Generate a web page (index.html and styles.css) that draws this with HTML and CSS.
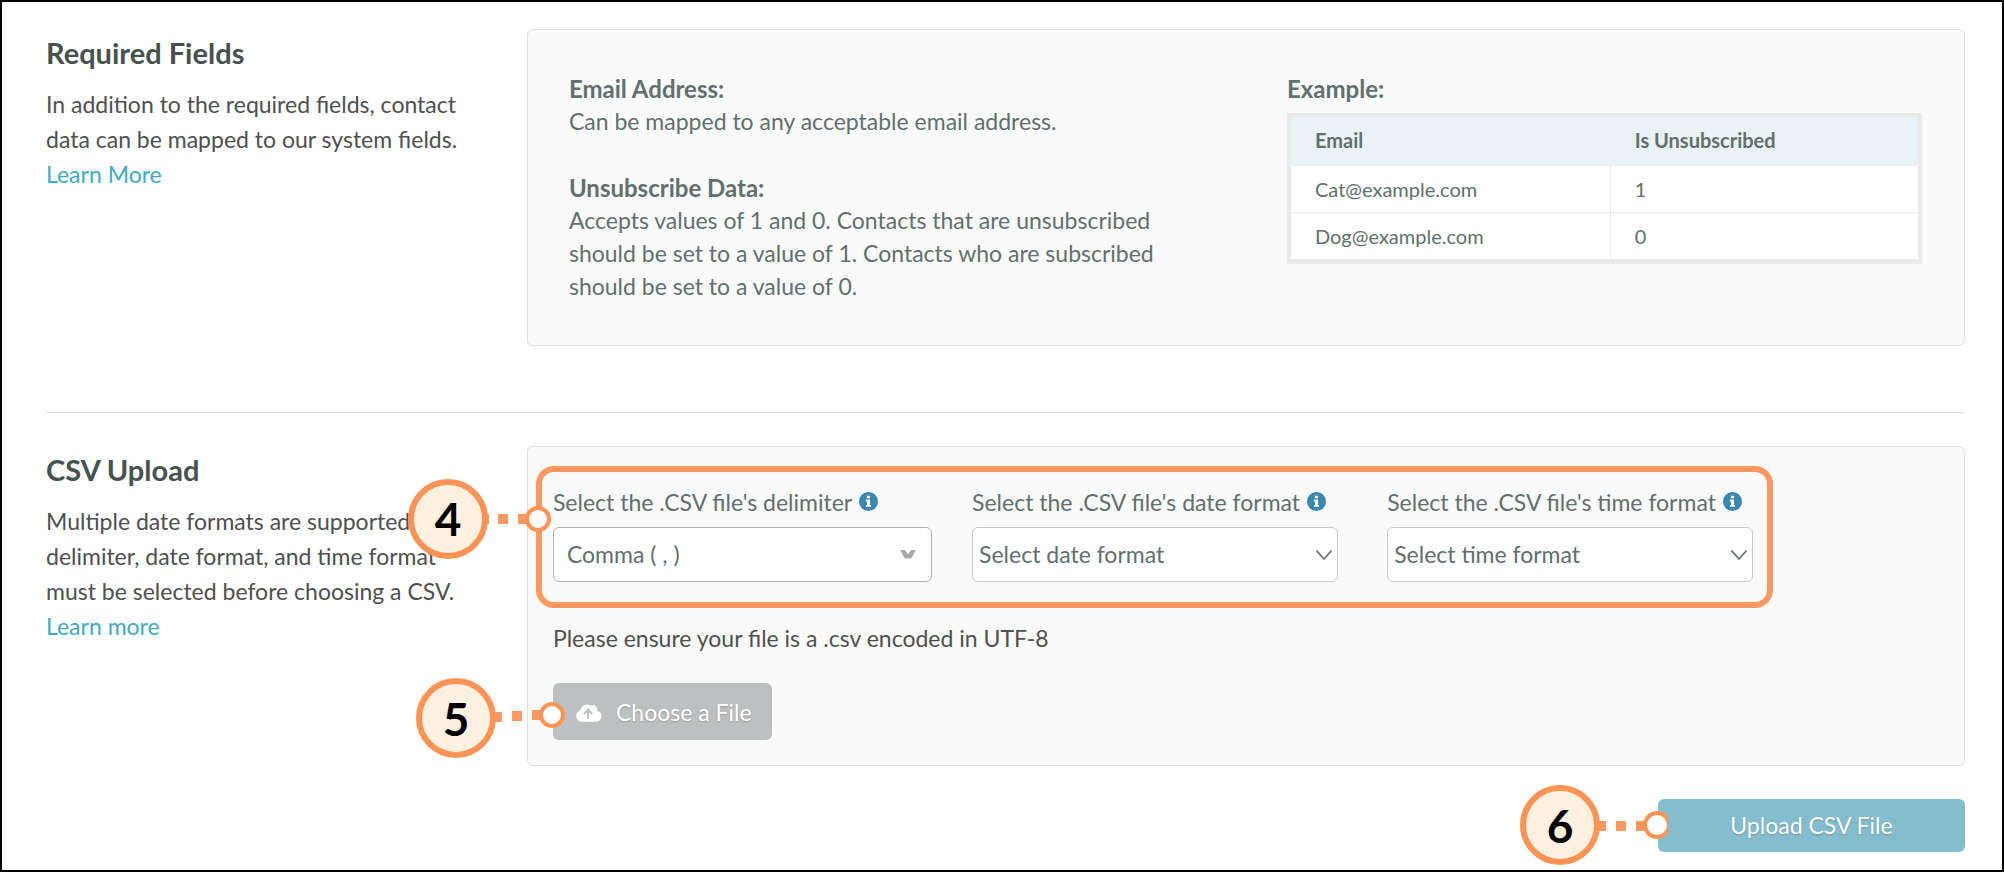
FILE: index.html
```html
<!DOCTYPE html>
<html lang="en">
<head>
<meta charset="utf-8">
<title>CSV Upload</title>
<link rel="stylesheet" href="styles.css">
</head>
<body>
<main class="page">
  <section class="section">
    <div class="intro">
      <h2 class="title">Required Fields</h2>
      <p class="copy">In addition to the required fields, contact data can be mapped to our system fields. <a class="link" href="#">Learn More</a></p>
    </div>
    <div class="panel panel-split">
      <div class="half">
        <dl class="specs">
          <dt>Email Address:</dt>
          <dd>Can be mapped to any acceptable email address.</dd>
          <dt>Unsubscribe Data:</dt>
          <dd>Accepts values of 1 and 0. Contacts that are unsubscribed should be set to a value of 1. Contacts who are subscribed should be set to a value of 0.</dd>
        </dl>
      </div>
      <div class="half">
        <h3 class="example">Example:</h3>
        <table class="table">
          <thead><tr><th>Email</th><th>Is Unsubscribed</th></tr></thead>
          <tbody>
            <tr><td>Cat@example.com</td><td>1</td></tr>
            <tr><td>Dog@example.com</td><td>0</td></tr>
          </tbody>
        </table>
      </div>
    </div>
  </section>

  <hr class="rule">

  <section class="section">
    <div class="intro">
      <h2 class="title">CSV Upload</h2>
      <p class="copy">Multiple date formats are supported. A delimiter, date format, and time format must be selected before choosing a CSV. <a class="link" href="#">Learn more</a></p>
    </div>
    <div class="panel panel-form">
      <div class="fields">
        <div class="field field-delimiter">
          <div class="label-row">
            <label for="delimiter">Select the .CSV file's delimiter</label>
            <svg class="info" viewBox="0 0 20 20" aria-hidden="true"><circle cx="10" cy="10" r="10"/><path d="M8.300 4h3.200v2.600H8.300zM7.400 8h4.200v5.600h1v1.900H7.400v-1.900h1V9.900h-1z"/></svg>
          </div>
          <div class="control control-strong">
            <select id="delimiter"><option>Comma ( , )</option></select>
            <svg class="caret" viewBox="0 0 16 10" aria-hidden="true"><path d="M0 0h5l3 4.500L11 0h5l-5 8.500H5z"/></svg>
          </div>
        </div>
        <div class="field field-date">
          <div class="label-row">
            <label for="date">Select the .CSV file's date format</label>
            <svg class="info" viewBox="0 0 20 20" aria-hidden="true"><circle cx="10" cy="10" r="10"/><path d="M8.300 4h3.200v2.600H8.300zM7.400 8h4.200v5.600h1v1.900H7.400v-1.900h1V9.900h-1z"/></svg>
          </div>
          <div class="control">
            <select id="date"><option>Select date format</option></select>
            <svg class="chevron" viewBox="0 0 16 10" aria-hidden="true"><path stroke-width="1.600" d="M.5.500L8 9l7.500-8.500"/></svg>
          </div>
        </div>
        <div class="field">
          <div class="label-row">
            <label for="time">Select the .CSV file's time format</label>
            <svg class="info" viewBox="0 0 20 20" aria-hidden="true"><circle cx="10" cy="10" r="10"/><path d="M8.300 4h3.200v2.600H8.300zM7.400 8h4.200v5.600h1v1.900H7.400v-1.900h1V9.900h-1z"/></svg>
          </div>
          <div class="control">
            <select id="time"><option>Select time format</option></select>
            <svg class="chevron" viewBox="0 0 16 10" aria-hidden="true"><path stroke-width="1.600" d="M.5.500L8 9l7.500-8.500"/></svg>
          </div>
        </div>
        <svg class="callout callout-fields" viewBox="0 0 150 84" aria-hidden="true">
          <path class="dots" d="M78 42h4M91 42h10M111 42h10"/>
          <circle class="badge" cx="41" cy="42" r="37"/>
          <circle class="dot" cx="131" cy="42" r="11"/>
          <text class="num" x="41" y="59">4</text>
        </svg>
      </div>
      <p class="note">Please ensure your file is a .csv encoded in UTF-8</p>
      <div class="anchor">
        <button class="btn btn-file" type="button">
          <svg class="cloud" viewBox="0 0 28 20" aria-hidden="true"><path fill-rule="evenodd" d="M22.600 8.700A4.200 4.200 0 0 0 16.400 3.500 7 7 0 0 0 5.600 8.300 6 6 0 0 0 6.500 20h15.700a5.700 5.700 0 0 0 .4-11.300zM13.600 6l5 5.200-1.500 1.500-2.500-2.500V17h-2v-6.800l-2.500 2.500-1.500-1.500z"/></svg>
          Choose a File
        </button>
        <svg class="callout callout-file" viewBox="0 0 150 84" aria-hidden="true">
          <path class="dots" d="M77 41h10M97 40h10M117 39h10"/>
          <circle class="badge" cx="41" cy="42" r="37"/>
          <circle class="dot" cx="137" cy="39" r="11"/>
          <text class="num" x="41" y="60">5</text>
        </svg>
      </div>
    </div>
  </section>

  <div class="actions">
    <div class="anchor anchor-wide">
      <button class="btn btn-upload" type="button">Upload CSV File</button>
      <svg class="callout callout-upload" viewBox="0 0 150 84" aria-hidden="true">
        <path class="dots" d="M78 43h10M98 43h10M118 43h10"/>
        <circle class="badge" cx="42" cy="42" r="37"/>
        <circle class="dot" cx="139" cy="42" r="12"/>
        <text class="num" x="42" y="60">6</text>
      </svg>
    </div>
  </div>
</main>
</body>
</html>
```
FILE: styles.css
```css
* {
  box-sizing: border-box;
}

body {
  margin: 0;
  background: #fff;
  color: #4f5050;
  font: 23px/35px Lato, "Open Sans", sans-serif;
}

h2, h3, p, dl, dd {
  margin: 0;
}

.page {
  display: flex;
  flex-direction: column;
  min-height: 100vh;
  padding: 27px 37px 16px 44px;
  border: 2px solid #000;
}

.section {
  display: grid;
  grid-template-columns: minmax(0, 1fr) minmax(0, 2.99fr);
}

.title {
  padding-top: 6px;
  color: #465150;
  font-size: 29px;
  font-weight: 700;
  line-height: 35px;
}

.copy {
  padding: 17px 56px 0 0;
}

.link {
  color: #3dacc4;
  text-decoration: none;
}

.panel {
  background: #fafafa;
  border: 1px solid #dedfdf;
  border-radius: 6px;
  color: #61706e;
}

.panel-split {
  display: grid;
  grid-template-columns: 1fr 1fr;
  line-height: 33px;
}

.half {
  padding: 42px 42px 42px 41px;
}

.specs dt {
  font-size: 24px;
  font-weight: 700;
}

.specs dd {
  padding-right: 30px;
}

.specs dd + dt {
  margin-top: 33px;
}

.example {
  font-size: 24px;
  line-height: 33px;
}

.table {
  width: 100%;
  margin-top: 8px;
  border: 4px solid #e9eaea;
  border-collapse: separate;
  border-spacing: 0;
  background: #fff;
  font-size: 20px;
  line-height: 30px;
  text-align: left;
}

.table th,
.table td {
  width: 50%;
  padding: 8px 24px;
  border-bottom: 1px solid #e9eaea;
}

.table th {
  padding-bottom: 10px;
  background: #eaf2f5;
}

.table td:first-child {
  width: 51%;
  border-right: 1px solid #e9eaea;
}

.rule {
  width: 100%;
  height: 1px;
  margin: 66px 0 33px;
  border: 0;
  background: #dcdddd;
}

.panel-form {
  padding: 39px 25px 25px;
}

.fields {
  position: relative;
  display: grid;
  grid-template-columns: 419fr 415fr 366fr;
  width: 86.6%;
}

.field-delimiter {
  padding-right: 40px;
}

.field-date {
  padding-right: 49px;
}

.fields::after {
  content: "";
  position: absolute;
  inset: -20px -20px -26px -17px;
  border: 6px solid #ff9860;
  border-radius: 18px;
  pointer-events: none;
}

.label-row {
  display: flex;
  align-items: center;
  gap: 7px;
  line-height: 33px;
  white-space: nowrap;
}

.info {
  width: 19px;
  height: 19px;
  margin-bottom: 2px;
  fill: #3a87b0;
}

.info path {
  fill: #fff;
}

.control {
  position: relative;
  margin-top: 8px;
}

.control select {
  width: 100%;
  height: 55px;
  padding: 0 40px 0 6px;
  border: 1px solid #cacccc;
  border-radius: 6px;
  appearance: none;
  background: #fff;
  color: inherit;
  font: inherit;
}

.control-strong select {
  padding-left: 13px;
  border-color: #adb0b0;
}

.caret,
.chevron {
  position: absolute;
  top: 23px;
  width: 16px;
  height: 10px;
  pointer-events: none;
}

.caret {
  right: 16px;
  fill: #a9abab;
}

.chevron {
  right: 6px;
  fill: none;
  stroke: #61706e;
}

.note {
  margin-top: 39px;
  color: #4f5050;
}

.anchor {
  position: relative;
  width: fit-content;
  margin-top: 27px;
}

.btn {
  display: flex;
  align-items: center;
  justify-content: center;
  border: 0;
  border-radius: 6px;
  color: #fff;
  font: inherit;
  text-shadow: 0 1px 2px rgba(0, 0, 0, 0.2);
}

.btn-file {
  gap: 14px;
  padding: 12px 20px 10px 22px;
  background: #bcc0c0;
}

.cloud {
  width: 27px;
  height: 20px;
  margin-bottom: 2px;
  fill: #fff;
}

.actions {
  display: flex;
  justify-content: flex-end;
  padding-top: 33px;
}

.anchor-wide {
  width: 16%;
  margin-top: 0;
}

.btn-upload {
  width: 100%;
  padding: 9px 16px;
  background: #84bece;
}

.callout {
  position: absolute;
  z-index: 1;
  width: 150px;
  height: 84px;
}

.callout-fields {
  top: -9px;
  left: -146px;
}

.callout-file {
  top: -7px;
  left: -138px;
}

.callout-upload {
  top: -16px;
  left: -140px;
}

.dots {
  fill: none;
  stroke: #ff9860;
  stroke-width: 10;
}

.badge {
  fill: #fff1e0;
  stroke: #ff9355;
  stroke-width: 6;
}

.dot {
  fill: #fff;
  stroke: #ff9355;
  stroke-width: 4;
}

.num {
  fill: #000;
  font-size: 46px;
  font-weight: 700;
  text-anchor: middle;
}
```
